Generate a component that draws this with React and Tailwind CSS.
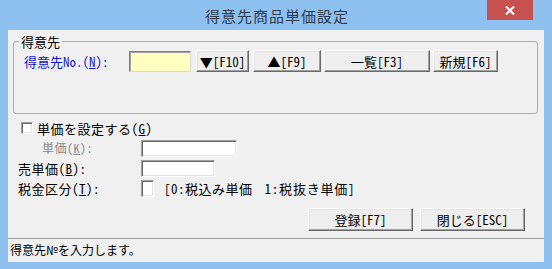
import React from "react";

function Btn({ w, h = "h-[22px]", children }) {
  return (
    <div
      className={`${w} ${h} flex items-center justify-center bg-[#eeeeee] border border-t-white border-l-white border-r-[#696969] border-b-[#696969] shadow-[inset_-1px_-1px_0_#a0a0a0,inset_1px_1px_0_#e3e3e3] text-[13px] leading-none text-black`}
    >
      {children}
    </div>
  );
}

function Sunken({ className }) {
  return (
    <div
      className={`${className} border border-t-[#a0a0a0] border-l-[#a0a0a0] border-r-white border-b-white shadow-[inset_1px_1px_0_#696969,inset_-1px_-1px_0_#e3e3e3]`}
    />
  );
}

export default function App() {
  return (
    <div className="w-[552px] h-[269px] bg-[#8ec0f0] flex flex-col overflow-hidden font-['Noto_Sans_CJK_JP','Noto_Sans',sans-serif] [font-feature-settings:'hwid']">
      {/* title bar */}
      <div className="relative h-[30px] flex items-center justify-center">
        <span className="text-[15px] leading-none text-[#2e3c4c] tracking-[1px] ml-[2px]">
          得意先商品単価設定
        </span>
        <div className="absolute right-[19px] top-0 w-[46px] h-[20px] bg-[#c75050] flex items-center justify-center">
          <svg width="10" height="9" viewBox="0 0 10 9">
            <path d="M1 0.5 L9 8.5 M9 0.5 L1 8.5" stroke="white" strokeWidth="2" />
          </svg>
        </div>
      </div>

      {/* client */}
      <div className="mx-[8px] h-[232px] bg-[#f0f0f0] flex flex-col text-[13px] leading-none text-black">
        {/* group box */}
        <div className="relative mt-[11px] ml-[5px] w-[525px] h-[73px] border border-[#adadad] rounded-[3px] pl-[10px] pt-[8px]">
          <span className="absolute -top-[7px] left-[5px] px-[2px] bg-[#f0f0f0] text-[13px] leading-none">
            得意先
          </span>
          <div className="flex items-center h-[22px]">
            <div className="w-[105px] text-[#1414c8] text-[13px]">
              得意先No.(<span className="underline">N</span>)：
            </div>
            <div className="w-[62px] h-[21px] bg-[#ffffc0] border border-t-[#808080] border-l-[#808080] border-r-[#d8d8d8] border-b-[#d8d8d8] shadow-[inset_1px_1px_0_#a0a0a0]" />
            <div className="ml-[5px]">
              <Btn w="w-[53px]">
                <span className="text-[13px]">▼</span>[F10]
              </Btn>
            </div>
            <div className="ml-[4px]">
              <Btn w="w-[68px]">
                <span className="text-[13px]">▲</span>[F9]
              </Btn>
            </div>
            <div className="ml-[3px]">
              <Btn w="w-[106px]">一覧[F3]</Btn>
            </div>
            <div className="ml-[3px]">
              <Btn w="w-[65px]">新規[F6]</Btn>
            </div>
          </div>
        </div>

        {/* form rows */}
        <div className="mt-[4px] flex flex-col tracking-[0.5px]">
          <div className="h-[20px] flex items-center pl-[13px]">
            <Sunken className="w-[12px] h-[12px] bg-white" />
            <span className="ml-[4px]">
              単価を設定する(<span className="underline">G</span>)
            </span>
          </div>
          <div className="h-[20px] flex items-center pl-[10px]">
            <div className="w-[123px] pl-[24px] text-[#8a8a8a] text-[12px]">
              単価(<span className="underline">K</span>)：
            </div>
            <Sunken className="w-[96px] h-[17px] bg-white" />
          </div>
          <div className="h-[20px] flex items-center pl-[10px]">
            <div className="w-[123px]">
              売単価(<span className="underline">B</span>)：
            </div>
            <Sunken className="w-[74px] h-[17px] bg-white" />
          </div>
          <div className="h-[20px] flex items-center pl-[10px]">
            <div className="w-[123px]">
              税金区分(<span className="underline">T</span>)：
            </div>
            <Sunken className="w-[13px] h-[17px] bg-white" />
            <span className="ml-[10px]">[0:税込み単価</span>
            <span className="ml-[12px] tracking-[0.8px]">1:税抜き単価]</span>
          </div>
        </div>

        {/* action buttons */}
        <div className="mt-[10px] flex justify-end gap-[7px] pr-[19px]">
          <Btn w="w-[105px]" h="h-[23px]">
            登録[F7]
          </Btn>
          <Btn w="w-[105px]" h="h-[23px]">
            閉じる[ESC]
          </Btn>
        </div>

        {/* status bar */}
        <div className="mt-[7px] flex-1 border-t border-[#a0a0a0] flex items-center pl-[2px] pb-[1px]">
          <span className="text-[12px]">得意先№を入力します。</span>
        </div>
      </div>
    </div>
  );
}
